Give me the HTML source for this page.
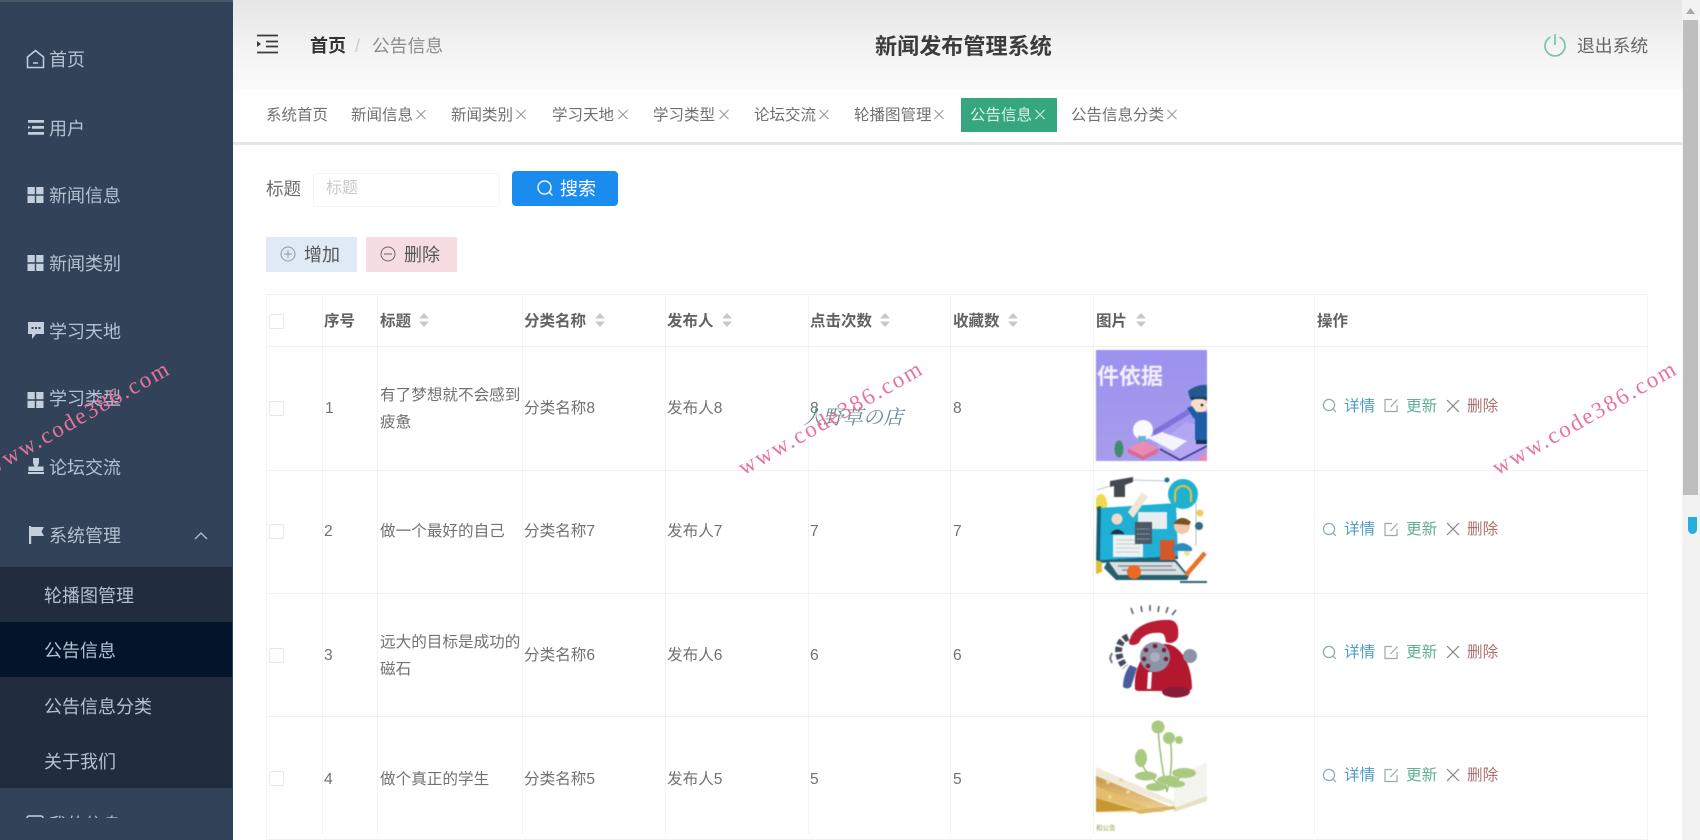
<!DOCTYPE html>
<html lang="zh"><head><meta charset="utf-8"><title>新闻发布管理系统</title>
<style>
*{box-sizing:border-box;margin:0;padding:0}
html,body{width:1700px;height:840px;overflow:hidden;background:#fff}
body{position:relative;font-family:"Liberation Sans","Noto Sans CJK SC",sans-serif;color:#666}
.a,.t,.s,.c,.h,.wm{position:absolute;white-space:nowrap}
svg{position:absolute;display:block}
#side{position:absolute;left:0;top:0;width:233px;height:840px;background:#324359;border-top:2px solid #4a5868;overflow:hidden}
.s{font-size:18px;line-height:26px;color:#b4c1d1;transform:translate(1px,1px)}
#sub{position:absolute;left:0;top:567px;width:232px;height:221px;background:#212d3e}
#act{position:absolute;left:0;top:622px;width:232px;height:55px;background:#02152b}
#clip{position:absolute;left:0;top:0;width:232px;height:818px;overflow:hidden}
#head{position:absolute;left:233px;top:0;width:1450px;height:90px;background:linear-gradient(#e6e6e6,#f3f3f3 55%,#fbfbfb)}
#tabs{position:absolute;left:233px;top:90px;width:1450px;height:55px;background:#fff;border-bottom:3px solid #e6e6e6}
.t{font-size:15.5px;line-height:22px;top:105px;color:#707070}
.x{position:absolute;top:109px;width:10px;height:11px}
.h{font-size:15.5px;font-weight:700;line-height:22px;top:311px;color:#626262}
.c{font-size:15.6px;line-height:22px;color:#727272;transform:translateY(1px)}
.v{position:absolute;top:294px;width:1px;height:540px;background:#f3f3f3}
.r{position:absolute;left:266px;width:1381px;height:1px;background:#f0f0f0}
.cb{position:absolute;left:269px;width:15px;height:15px;border:1px solid #e8e8e8;border-radius:2px;background:#fff}
.op1{color:#4f9fc8}.op2{color:#62b193}.op3{color:#b07070}
.wm{font-family:"Liberation Serif",serif;font-size:23px;letter-spacing:2.1px;color:#e9739d;transform-origin:0 100%;transform:rotate(-29.5deg);line-height:24px}
.img{filter:blur(.5px)}
</style></head><body>

<svg width="0" height="0" style="position:absolute"><defs>
<symbol id="grid" viewBox="0 0 16 16"><path fill="#c3cfdc" d="M0 0h7.300v7.300H0zM8.700 0h7.300v7.300H8.700zM0 8.700h7.300v7.300H0zM8.700 8.700h7.300v7.300H8.700z"/></symbol>
<symbol id="sort" viewBox="0 0 10 14"><path fill="#c4c8ce" d="M5 0l5 5.500H0zM5 14L0 8.500h10z"/></symbol>
<symbol id="xx" viewBox="0 0 11 11"><path fill="none" stroke="#8a8a8a" stroke-width="1" d="M.5.5l10 10M10.500.5l-10 10"/></symbol>
<symbol id="sr" viewBox="0 0 15 15"><circle cx="7" cy="7" r="5.600" fill="none" stroke="#8da8b8" stroke-width="1.200"/><path d="M11 11l3 3" stroke="#8da8b8" stroke-width="1.200"/></symbol>
<symbol id="ed" viewBox="0 0 15 15"><path fill="none" stroke="#9aaaa5" stroke-width="1.200" d="M8 1.500H1v12h12V7M6.500 9L13.500 1.500"/></symbol>
<symbol id="dx" viewBox="0 0 14 14"><path fill="none" stroke="#8b8080" stroke-width="1.200" d="M1 1l12 12M13 1L1 13"/></symbol>
</defs></svg>

<div id="side"></div>
<div id="sub"></div><div id="act"></div>
<div id="clip">
<div class="s" style="left:48px;top:46px">首页</div>
<div class="s" style="left:48px;top:115px">用户</div>
<div class="s" style="left:48px;top:182px">新闻信息</div>
<div class="s" style="left:48px;top:250px">新闻类别</div>
<div class="s" style="left:48px;top:318px">学习天地</div>
<div class="s" style="left:48px;top:385px">学习类型</div>
<div class="s" style="left:48px;top:454px">论坛交流</div>
<div class="s" style="left:48px;top:522px">系统管理</div>
<div class="s" style="left:43px;top:582px">轮播图管理</div>
<div class="s" style="left:43px;top:637px">公告信息</div>
<div class="s" style="left:43px;top:693px">公告信息分类</div>
<div class="s" style="left:43px;top:748px">关于我们</div>
<div class="s" style="left:48px;top:811px">我的信息</div>
<svg style="left:26px;top:814px" width="18" height="18" viewBox="0 0 18 18"><rect x="1" y="2" width="16" height="14" rx="2" fill="none" stroke="#c3cfdc" stroke-width="1.500"/></svg>
</div>
<svg style="left:26px;top:49px" width="19" height="20" viewBox="0 0 19 20"><path fill="none" stroke="#c3cfdc" stroke-width="1.500" d="M1.500 8L9.500 1.500 17.500 8v10.500h-16zM7 14h5"/></svg>
<svg style="left:28px;top:120px" width="16" height="15" viewBox="0 0 16 15"><path fill="#c3cfdc" d="M0 0h16v2.800H0zM4 6h12v2.800H4zM0 6l3 1.400-3 1.400zM0 12h16v2.800H0z"/></svg>
<svg style="left:27px;top:187px" width="17" height="16"><use href="#grid"/></svg>
<svg style="left:27px;top:255px" width="17" height="16"><use href="#grid"/></svg>
<svg style="left:28px;top:322px" width="16" height="17" viewBox="0 0 16 17"><path fill="#c3cfdc" d="M0 0h16v12H8l-4 5v-5H0z"/><path fill="#324359" d="M3.500 5h2v2h-2zM7 5h2v2H7zM10.500 5h2v2h-2z"/></svg>
<svg style="left:27px;top:392px" width="17" height="16"><use href="#grid"/></svg>
<svg style="left:28px;top:458px" width="16" height="16" viewBox="0 0 16 16"><path fill="#c3cfdc" d="M5 0h6v5l-1.500 3.500H15.500V13H.5V8.500h6L5 5zM0 14h16v2H0z"/></svg>
<svg style="left:29px;top:526px" width="16" height="18" viewBox="0 0 16 18"><path fill="#c3cfdc" d="M0 0h2.200v18H0zM2.200 1H15l-2.500 4.500L15 10H2.200z"/></svg>
<svg style="left:194px;top:531px" width="14" height="9" viewBox="0 0 14 9"><path fill="none" stroke="#b4c1d1" stroke-width="1.300" d="M1 8l6-6 6 6"/></svg>

<div id="head"></div>
<svg style="left:257px;top:34px" width="22" height="20" viewBox="0 0 22 20"><path stroke="#3a3a3a" stroke-width="1.700" d="M0 1.500h21M9 7.500h12M9 12.500h12M0 18.500h21"/><path fill="#3a3a3a" d="M0 7l4 3-4 3z"/></svg>
<div class="a" style="left:310px;top:33px;font-size:18px;line-height:26px;font-weight:700;color:#333">首页</div>
<div class="a" style="left:355px;top:33px;font-size:18px;line-height:26px;color:#ccc">/</div>
<div class="a" style="left:372px;top:33px;font-size:17.800px;line-height:26px;color:#8c8c8c">公告信息</div>
<div class="a" style="left:875px;top:32px;font-size:22.100px;line-height:30px;font-weight:700;color:#3c3c3c">新闻发布管理系统</div>
<svg style="left:1543px;top:33px" width="24" height="24" viewBox="0 0 24 24"><path fill="none" stroke="#7cc2a7" stroke-width="1.700" d="M7.500 4A10 10 0 1 0 16.500 4M12 1v11"/></svg>
<div class="a" style="left:1577px;top:33px;font-size:17.800px;line-height:26px;color:#666">退出系统</div>

<div id="tabs"></div>
<div class="a" style="left:961px;top:98px;width:96px;height:34px;background:#35a67d"></div>
<div class="t" style="left:266px">系统首页</div>
<div class="t" style="left:351px">新闻信息</div><svg class="x" style="left:416px"><use href="#xx"/></svg>
<div class="t" style="left:451px">新闻类别</div><svg class="x" style="left:516px"><use href="#xx"/></svg>
<div class="t" style="left:552px">学习天地</div><svg class="x" style="left:618px"><use href="#xx"/></svg>
<div class="t" style="left:653px">学习类型</div><svg class="x" style="left:719px"><use href="#xx"/></svg>
<div class="t" style="left:754px">论坛交流</div><svg class="x" style="left:819px"><use href="#xx"/></svg>
<div class="t" style="left:854px">轮播图管理</div><svg class="x" style="left:934px"><use href="#xx"/></svg>
<div class="t" style="left:970px;color:#d8f3e8">公告信息</div><svg class="x" style="left:1035px" viewBox="0 0 11 11"><path fill="none" stroke="#e4f7ef" stroke-width="1.100" d="M.5.5l10 10M10.500.5l-10 10"/></svg>
<div class="t" style="left:1071px">公告信息分类</div><svg class="x" style="left:1167px"><use href="#xx"/></svg>

<div class="a" style="left:266px;top:176px;font-size:17.500px;line-height:26px;color:#6b6b6b">标题</div>
<div class="a" style="left:313px;top:173px;width:187px;height:34px;border:1px solid #f5f5f5;border-radius:3px"></div>
<div class="a" style="left:326px;top:177px;font-size:16px;line-height:24px;color:#c9c9c9">标题</div>
<div class="a" style="left:512px;top:171px;width:106px;height:35px;background:#1a8cf0;border-radius:4px"></div>
<svg style="left:536px;top:179px" width="18" height="18" viewBox="0 0 18 18"><circle cx="8.500" cy="8.500" r="6.500" fill="none" stroke="#e8f4ff" stroke-width="1.500"/><path d="M13 13l3.500 3.500" stroke="#e8f4ff" stroke-width="1.500"/></svg>
<div class="a" style="left:560px;top:176px;font-size:18px;line-height:26px;color:#fff">搜索</div>

<div class="a" style="left:266px;top:237px;width:91px;height:35px;background:#dfeaf6"></div>
<svg style="left:280px;top:246px" width="16" height="16" viewBox="0 0 16 16"><circle cx="8" cy="8" r="7" fill="none" stroke="#8d9aa6"/><path d="M4 8h8M8 4v8" stroke="#8d9aa6"/></svg>
<div class="a" style="left:304px;top:242px;font-size:18px;line-height:26px;color:#555">增加</div>
<div class="a" style="left:366px;top:237px;width:91px;height:35px;background:#f6dde2"></div>
<svg style="left:380px;top:246px" width="16" height="16" viewBox="0 0 16 16"><circle cx="8" cy="8" r="7" fill="none" stroke="#666"/><path d="M4 8h8" stroke="#666"/></svg>
<div class="a" style="left:404px;top:242px;font-size:18px;line-height:26px;color:#555">删除</div>

<!-- table lines -->
<div class="r" style="top:294px"></div><div class="r" style="top:346px"></div><div class="r" style="top:470px"></div><div class="r" style="top:593px"></div><div class="r" style="top:716px"></div><div class="r" style="top:839px"></div>
<div class="v" style="left:266px;height:546px"></div><div class="v" style="left:322px"></div><div class="v" style="left:377px"></div><div class="v" style="left:522px"></div><div class="v" style="left:665px"></div><div class="v" style="left:808px"></div><div class="v" style="left:950px"></div><div class="v" style="left:1093px"></div><div class="v" style="left:1314px"></div><div class="v" style="left:1647px;height:546px"></div>

<div class="cb" style="top:314px"></div><div class="cb" style="top:401px"></div><div class="cb" style="top:524px"></div><div class="cb" style="top:648px"></div><div class="cb" style="top:771px"></div>

<div class="h" style="left:324px">序号</div>
<div class="h" style="left:380px">标题</div><svg style="left:419px;top:313px" width="10" height="14"><use href="#sort"/></svg>
<div class="h" style="left:524px">分类名称</div><svg style="left:595px;top:313px" width="10" height="14"><use href="#sort"/></svg>
<div class="h" style="left:667px">发布人</div><svg style="left:722px;top:313px" width="10" height="14"><use href="#sort"/></svg>
<div class="h" style="left:810px">点击次数</div><svg style="left:880px;top:313px" width="10" height="14"><use href="#sort"/></svg>
<div class="h" style="left:953px">收藏数</div><svg style="left:1008px;top:313px" width="10" height="14"><use href="#sort"/></svg>
<div class="h" style="left:1096px">图片</div><svg style="left:1136px;top:313px" width="10" height="14"><use href="#sort"/></svg>
<div class="h" style="left:1317px">操作</div>

<!-- row 1 -->
<div class="c" style="left:325px;top:397px">1</div>
<div class="c" style="left:380px;top:384px">有了梦想就不会感到</div><div class="c" style="left:380px;top:411px">疲惫</div>
<div class="c" style="left:524px;top:397px">分类名称8</div><div class="c" style="left:667px;top:397px">发布人8</div><div class="c" style="left:810px;top:397px">8</div><div class="c" style="left:953px;top:397px">8</div>
<!-- row 2 -->
<div class="c" style="left:324px;top:520px">2</div>
<div class="c" style="left:380px;top:520px">做一个最好的自己</div>
<div class="c" style="left:524px;top:520px">分类名称7</div><div class="c" style="left:667px;top:520px">发布人7</div><div class="c" style="left:810px;top:520px">7</div><div class="c" style="left:953px;top:520px">7</div>
<!-- row 3 -->
<div class="c" style="left:324px;top:644px">3</div>
<div class="c" style="left:380px;top:631px">远大的目标是成功的</div><div class="c" style="left:380px;top:658px">磁石</div>
<div class="c" style="left:524px;top:644px">分类名称6</div><div class="c" style="left:667px;top:644px">发布人6</div><div class="c" style="left:810px;top:644px">6</div><div class="c" style="left:953px;top:644px">6</div>
<!-- row 4 -->
<div class="c" style="left:324px;top:768px">4</div>
<div class="c" style="left:380px;top:768px">做个真正的学生</div>
<div class="c" style="left:524px;top:768px">分类名称5</div><div class="c" style="left:667px;top:768px">发布人5</div><div class="c" style="left:810px;top:768px">5</div><div class="c" style="left:953px;top:768px">5</div>

<!-- ops -->
<svg style="left:1322px;top:398px" width="15" height="15"><use href="#sr"/></svg><div class="c op1" style="left:1344px;top:395px">详情</div><svg style="left:1384px;top:398px" width="15" height="15"><use href="#ed"/></svg><div class="c op2" style="left:1406px;top:395px">更新</div><svg style="left:1446px;top:399px" width="14" height="14"><use href="#dx"/></svg><div class="c op3" style="left:1467px;top:395px">删除</div>
<svg style="left:1322px;top:522px" width="15" height="15"><use href="#sr"/></svg><div class="c op1" style="left:1344px;top:518px">详情</div><svg style="left:1384px;top:522px" width="15" height="15"><use href="#ed"/></svg><div class="c op2" style="left:1406px;top:518px">更新</div><svg style="left:1446px;top:522px" width="14" height="14"><use href="#dx"/></svg><div class="c op3" style="left:1467px;top:518px">删除</div>
<svg style="left:1322px;top:645px" width="15" height="15"><use href="#sr"/></svg><div class="c op1" style="left:1344px;top:641px">详情</div><svg style="left:1384px;top:645px" width="15" height="15"><use href="#ed"/></svg><div class="c op2" style="left:1406px;top:641px">更新</div><svg style="left:1446px;top:645px" width="14" height="14"><use href="#dx"/></svg><div class="c op3" style="left:1467px;top:641px">删除</div>
<svg style="left:1322px;top:768px" width="15" height="15"><use href="#sr"/></svg><div class="c op1" style="left:1344px;top:764px">详情</div><svg style="left:1384px;top:768px" width="15" height="15"><use href="#ed"/></svg><div class="c op2" style="left:1406px;top:764px">更新</div><svg style="left:1446px;top:768px" width="14" height="14"><use href="#dx"/></svg><div class="c op3" style="left:1467px;top:764px">删除</div>

<!-- image 1 -->
<svg class="img" style="left:1096px;top:350px" width="111" height="111" viewBox="0 0 111 111">
<defs><linearGradient id="g1" x1="0" y1="0" x2="0" y2="1"><stop offset="0" stop-color="#9a92ee"/><stop offset="1" stop-color="#a99ced"/></linearGradient></defs>
<rect width="111" height="111" fill="url(#g1)"/>
<path fill="#7f70dc" d="M56 81l36-22 2 5-36 22z"/>
<path fill="#b3a6f2" d="M60 96l30-24 21 6v18l-27 14z"/>
<path fill="none" stroke="#3f3590" stroke-width="1.600" d="M64 99l20 11 27-14"/>
<text x="1" y="34" font-size="22" font-weight="700" fill="#f2efff" font-family="'Liberation Sans','Noto Sans CJK SC',sans-serif">件依据</text>
<path fill="#f4f4ff" d="M52 88l14-6 25 9-14 10z"/>
<circle cx="47" cy="80" r="10" fill="#fbfbff"/><rect x="42" y="86" width="8" height="12" fill="#6db3d8"/>
<path fill="#ec8bb0" d="M32 98l15-7 15 7-15 8z"/><path fill="#d96c9c" d="M32 98v5l15 7 15-7v-5l-15 8z"/>
<ellipse cx="23" cy="99" rx="4.500" ry="8.500" fill="#3f8d6b"/>
<path fill="#24588f" d="M92 41q9-7 19-6v14H94z"/><rect x="95" y="47" width="16" height="3" fill="#163a66"/>
<rect x="95" y="49" width="16" height="13" rx="5" fill="#fbdcc4"/><circle cx="106" cy="55" r="1.300" fill="#222"/>
<path fill="#1e5ea6" d="M99 62h12v28H99z"/><path fill="#1e5ea6" d="M91 58l5-2 6 8-4 5z"/><rect x="100" y="90" width="11" height="4" fill="#16305c"/>
<path fill="#ec8bb0" d="M102 108l9-5v8h-9z"/>
</svg>

<!-- image 2 -->
<svg class="img" style="left:1096px;top:474px" width="111" height="111" viewBox="0 0 111 111">
<rect width="111" height="111" fill="#fff"/>
<path fill="#444851" d="M14 7l23-4v5l-8 3v12H18V12l-4 1z"/>
<path d="M1 16l13-4M37 6l34 1M100 24v48" stroke="#aab2b2" stroke-width=".8" fill="none"/><circle cx="71" cy="6" r="2.500" fill="#2e6b84"/>
<circle cx="87" cy="20" r="15" fill="#1fb2d0"/><path d="M79 28v-8a8 8 0 0 1 16 0v8" stroke="#e8c33a" stroke-width="2" fill="none"/>
<circle cx="104" cy="39" r="3.500" fill="#efcf59"/><circle cx="103" cy="52" r="4" fill="#2e6b84"/><circle cx="91" cy="79" r="3" fill="#efe39b"/>
<ellipse cx="5" cy="30" rx="6" ry="10" fill="#f3d84b"/>
<path fill="#1fb0d5" d="M4 34l76-5 2 53-78 4z"/><path fill="#14617e" d="M1 33l4-1-1 56-4 1z"/><path fill="#14617e" d="M4 86l78-4v3l-78 4z"/>
<path fill="#f1e6d6" d="M32 38l14-20 6 5-15 21z"/>
<rect x="42" y="38" width="29" height="17" fill="#e8edf0"/>
<rect x="17" y="61" width="30" height="22" fill="#eef1f2"/><path d="M20 66h24M20 70h24M20 74h24M20 78h24" stroke="#b8c1c6" stroke-width=".8"/>
<circle cx="21" cy="45" r="5.500" fill="#f2d9c6"/><path fill="#24323d" d="M14 60q7-9 15 0z"/>
<rect x="39" y="48" width="17" height="22" fill="#4b5a68"/><path d="M41 55h13M41 60h13M41 65h13" stroke="#97a8b3" stroke-dasharray="2 1"/>
<rect x="64" y="66" width="15" height="20" fill="#d6582a"/>
<circle cx="86" cy="52" r="8" fill="#f1c9a8"/><path fill="#7a5226" d="M77 50q8-11 18-2l-2 3-12-1z"/><path fill="#2e8bc0" d="M76 74q10-10 20 0v3H76z"/>
<path fill="#26606f" d="M8 94l4-8h68l13 16-2 4H20z"/><path fill="#d9dfe2" d="M13 88h66l11 13H22z"/><path d="M22 92h54M26 96h54" stroke="#8a8f93" stroke-width="1.500"/>
<circle cx="38" cy="98" r="7" fill="#ea6a22"/><path d="M0 86l6 2v10l-6 2z" fill="#e3bd38"/>
<path stroke="#e8722a" stroke-width="4.500" d="M90 101l19-22"/><path stroke="#2a6675" stroke-width="2" d="M84 108h27"/>
</svg>

<!-- image 3 -->
<svg class="img" style="left:1096px;top:597px" width="111" height="111" viewBox="0 0 111 111">
<rect width="111" height="111" fill="#fff"/>
<path stroke="#555" stroke-width="1.500" d="M37 17l-2-6M46 15l-1-6M54 14V8M62 15l1-6M70 16l2-6M76 18l4-5"/>
<path fill="#ba1c33" d="M34 42c4-14 24-20 40-19 8 1 9 9 8 17-2 6-8 7-12 5-1-5-1-8-5-9-10-1-16 2-20 6-2 5-5 6-9 6-3 0-4-3-2-6z"/>
<path fill="#b4182f" d="M39 92c-2-24 12-44 30-45 16 0 27 22 27 43 0 3-2 4-5 4H44c-3 0-5-1-5-2z"/>
<circle cx="59" cy="60" r="15" fill="#8d93a6"/><circle cx="59" cy="60" r="5" fill="#a9afbd"/><g fill="#7a1b3a"><circle cx="59" cy="49" r="2.300"/><circle cx="50" cy="53" r="2.300"/><circle cx="48" cy="62" r="2.300"/><circle cx="68" cy="53" r="2.300"/><circle cx="70" cy="62" r="2.300"/><circle cx="52" cy="69" r="2.300"/></g>
<path fill="#fff" d="M52 75h4l-1 17h-4z"/>
<circle cx="94" cy="59" r="7" fill="#8d93a6"/>
<ellipse cx="80" cy="95" rx="14" ry="5.500" fill="#8a1b3a"/>
<path fill="#4a5c9a" d="M34 68l7 3-6 19q-4 3-8 0 0-12 7-22z"/>
<path stroke="#454a5c" stroke-width="7" stroke-dasharray="5 2" fill="none" d="M32 40c-13 5-11 20-3 30"/>
<path d="M16 56l-2 5 2 5" stroke="#777" stroke-width="2" fill="none"/>
</svg>

<!-- image 4 -->
<svg class="img" style="left:1096px;top:720px" width="111" height="111" viewBox="0 0 111 111">
<defs><linearGradient id="g4" x1="0" y1="0" x2="0" y2="1"><stop offset="0" stop-color="#c9964a"/><stop offset="1" stop-color="#f0d59a"/></linearGradient></defs>
<rect width="111" height="111" fill="#fff"/>
<path fill="#f4f4ef" d="M78 58l33-16v38L78 90z"/>
<path fill="#e8dfc4" d="M78 88l33-12v5L78 92z"/>
<g fill="none" stroke="#92b870" stroke-width="1.400"><path d="M71 72Q64 40 62 8M71 72Q78 44 74 18M69 68Q50 56 44 40M73 66q8-8 18-12"/></g>
<g fill="#a9c981"><circle cx="62" cy="7" r="6.500"/><circle cx="73" cy="18" r="6"/><circle cx="83" cy="20" r="4"/><ellipse cx="45" cy="38" rx="6" ry="9"/><ellipse cx="50" cy="56" rx="11" ry="4.500"/><ellipse cx="88" cy="53" rx="12" ry="5"/><ellipse cx="72" cy="60" rx="11" ry="4.500"/><ellipse cx="60" cy="67" rx="10" ry="4"/><ellipse cx="80" cy="64" rx="9" ry="3.500"/></g>
<path fill="#f0ead8" d="M0 47l79 35v4L0 58z"/>
<path fill="url(#g4)" d="M0 56l75 31-8 5H0z"/>
<path fill="#e5be6c" d="M0 66l52 22-14 1L0 74z"/>
<path fill="#c9972f" d="M0 78l40 12-40 2z"/>
<path fill="#d8b664" d="M36 90l42-4 2 3-36 5z"/>
<g fill="#f0d98c"><circle cx="12" cy="62" r="2"/><circle cx="25" cy="60" r="2"/><circle cx="32" cy="72" r="2"/><circle cx="14" cy="77" r="2"/></g>
<text x="0" y="110" font-size="6.500" fill="#8aa83e" font-family="'Liberation Sans','Noto Sans CJK SC',sans-serif">和公告</text>
</svg>

<!-- overlay text -->
<div class="a" style="left:803px;top:405px;font-family:'Liberation Serif','Noto Serif CJK SC',serif;font-style:italic;font-size:20px;line-height:26px;color:#5e8e90">人野草の店</div>

<!-- scrollbar -->
<div class="a" style="left:1682px;top:0;width:18px;height:840px;background:#f2f2f2"></div>
<div class="a" style="left:1683px;top:20px;width:15px;height:475px;background:#bebebe"></div>
<svg style="left:1686px;top:8px" width="9" height="6" viewBox="0 0 9 6"><path fill="#a8a8a8" d="M4.500 0L9 6H0z"/></svg>
<div class="a" style="left:1688px;top:517px;width:9px;height:17px;background:#27aedc;border-radius:0 0 5px 5px"></div>

<!-- watermarks -->
<div class="wm" style="left:-7px;top:456px">www.code386.com</div>
<div class="wm" style="left:746px;top:456px">www.code386.com</div>
<div class="wm" style="left:1500px;top:456px">www.code386.com</div>

</body></html>
